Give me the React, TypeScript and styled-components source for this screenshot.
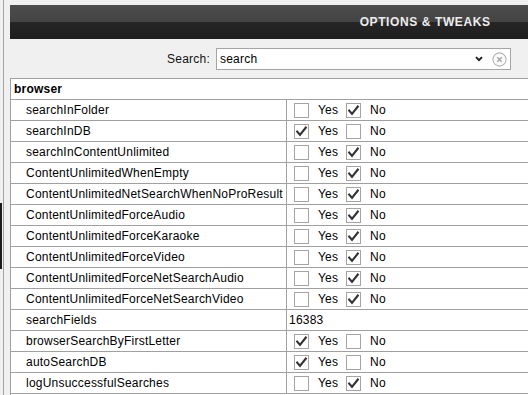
import React from "react";
import styled, { createGlobalStyle } from "styled-components";

const Global = createGlobalStyle`
  html, body { margin: 0; padding: 0; background: #f0f0f0; overflow: hidden; }
  body { font-family: "Liberation Sans", Arial, sans-serif; font-size: 12px; letter-spacing: 0.22px; color: #000; }
  * { box-sizing: border-box; }
`;

const Frame = styled.div`
  display: flex;
  height: 395px;
  width: 528px;
  overflow: hidden;
`;

const Edge = styled.div`
  flex: 0 0 4px;
  display: flex;
  flex-direction: column;
  border-right: 1px solid #a3a3a3;
`;

const EdgeSpacer = styled.div`
  flex: 0 0 203px;
`;

const EdgeMark = styled.div`
  flex: 0 0 66px;
  width: 2px;
  background: #1c1c1c;
`;

const Main = styled.div`
  flex: 1;
  min-width: 0;
  padding: 5px 0 0 6px;
  display: flex;
  flex-direction: column;
`;

const TitleBar = styled.div`
  height: 34px;
  display: flex;
  align-items: center;
  justify-content: flex-end;
  padding-right: 38px;
  background: linear-gradient(#4c4c4c 0%, #444 50%, #262626 50%, #1e1e1e 100%);
`;

const Title = styled.span`
  color: #ececec;
  font-weight: bold;
  font-size: 12px;
  letter-spacing: 0.6px;
  margin-right: -0.6px;
`;

const SearchRow = styled.div`
  display: flex;
  align-items: center;
  justify-content: flex-end;
  padding: 9px 17px 8px 0;
`;

const SearchLabel = styled.span`
  margin-right: 6px;
  color: #111;
`;

const SearchBox = styled.div`
  width: 295px;
  height: 22px;
  background: #fff;
  border: 1px solid #a5a5a5;
  display: flex;
  align-items: center;
  padding: 0 3px 0 3px;
`;

const SearchText = styled.span`
  flex: 1;
  color: #000;
`;

const IconSlot = styled.span<{ $gap: number }>`
  display: flex;
  align-items: center;
  margin-left: ${(p) => p.$gap}px;
`;

const Table = styled.div`
  border-left: 1px solid #a0a0a0;
  border-top: 1px solid #a0a0a0;
  background: #fff;
  flex: 1;
`;

const GroupRow = styled.div`
  height: 21px;
  border-bottom: 1px solid #a0a0a0;
  display: flex;
  align-items: center;
  padding-left: 3px;
  font-weight: bold;
`;

const Row = styled.div`
  height: 21px;
  border-bottom: 1px solid #a0a0a0;
  display: grid;
  grid-template-columns: 276px 1fr;
`;

const NameCell = styled.div`
  border-right: 1px solid #a0a0a0;
  display: flex;
  align-items: center;
  padding-left: 15px;
  white-space: nowrap;
  overflow: hidden;
`;

const ValueCell = styled.div<{ $pad: number }>`
  display: flex;
  align-items: center;
  padding-left: ${(p) => p.$pad}px;
`;

const Box = styled.span`
  width: 15px;
  height: 15px;
  border: 1px solid #a4a4a4;
  background: #fff;
  display: flex;
  align-items: center;
  justify-content: center;
`;

const OptLabel = styled.span<{ $w: number }>`
  margin-left: 9px;
  width: ${(p) => p.$w}px;
`;

const Check = () => (
  <svg width="13" height="13" viewBox="0 0 13 13">
    <path d="M2.2 6.6 L5 9.8 L10.8 2.6" fill="none" stroke="#333" strokeWidth="2.1" strokeLinecap="square" strokeLinejoin="miter" />
  </svg>
);

const Chevron = () => (
  <svg width="8" height="6" viewBox="0 0 8 6">
    <path d="M1 1.2 L4 4.2 L7 1.2" fill="none" stroke="#1a1a1a" strokeWidth="1.9" />
  </svg>
);

const ClearIcon = () => (
  <svg width="15" height="15" viewBox="0 0 15 15">
    <circle cx="7.5" cy="7.5" r="6.6" fill="#fafafa" stroke="#b4b4b4" strokeWidth="1.1" />
    <path d="M5.3 5.3 L9.7 9.7 M9.7 5.3 L5.3 9.7" stroke="#a8a8a8" strokeWidth="1.6" />
  </svg>
);

type Item = { name: string; value: boolean | string };

const items: Item[] = [
  { name: "searchInFolder", value: false },
  { name: "searchInDB", value: true },
  { name: "searchInContentUnlimited", value: false },
  { name: "ContentUnlimitedWhenEmpty", value: false },
  { name: "ContentUnlimitedNetSearchWhenNoProResult", value: false },
  { name: "ContentUnlimitedForceAudio", value: false },
  { name: "ContentUnlimitedForceKaraoke", value: false },
  { name: "ContentUnlimitedForceVideo", value: false },
  { name: "ContentUnlimitedForceNetSearchAudio", value: false },
  { name: "ContentUnlimitedForceNetSearchVideo", value: false },
  { name: "searchFields", value: "16383" },
  { name: "browserSearchByFirstLetter", value: true },
  { name: "autoSearchDB", value: true },
  { name: "logUnsuccessfulSearches", value: false },
];

const BoolValue = ({ on }: { on: boolean }) => (
  <ValueCell $pad={7}>
    <Box>{on && <Check />}</Box>
    <OptLabel $w={28}>Yes</OptLabel>
    <Box>{!on && <Check />}</Box>
    <OptLabel $w={30}>No</OptLabel>
  </ValueCell>
);

export default function App() {
  return (
    <>
      <Global />
      <Frame>
        <Edge>
          <EdgeSpacer />
          <EdgeMark />
        </Edge>
        <Main>
          <TitleBar>
            <Title>OPTIONS &amp; TWEAKS</Title>
          </TitleBar>
          <SearchRow>
            <SearchLabel>Search:</SearchLabel>
            <SearchBox>
              <SearchText>search</SearchText>
              <IconSlot $gap={0}>
                <Chevron />
              </IconSlot>
              <IconSlot $gap={9}>
                <ClearIcon />
              </IconSlot>
            </SearchBox>
          </SearchRow>
          <Table>
            <GroupRow>browser</GroupRow>
            {items.map((it) => (
              <Row key={it.name}>
                <NameCell>{it.name}</NameCell>
                {typeof it.value === "boolean" ? (
                  <BoolValue on={it.value} />
                ) : (
                  <ValueCell $pad={2}>{it.value}</ValueCell>
                )}
              </Row>
            ))}
          </Table>
        </Main>
      </Frame>
    </>
  );
}
